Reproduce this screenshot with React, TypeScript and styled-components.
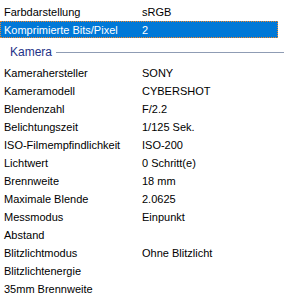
import styled, { createGlobalStyle } from 'styled-components'

type Prop = { label: string; value?: string }

const imageProps: Prop[] = [
  { label: 'Auflösungseinheit', value: '2' },
  { label: 'Farbdarstellung', value: 'sRGB' }
]

const selectedProp: Prop = { label: 'Komprimierte Bits/Pixel', value: '2' }

const cameraProps: Prop[] = [
  { label: 'Kamerahersteller', value: 'SONY' },
  { label: 'Kameramodell', value: 'CYBERSHOT' },
  { label: 'Blendenzahl', value: 'F/2.2' },
  { label: 'Belichtungszeit', value: '1/125 Sek.' },
  { label: 'ISO-Filmempfindlichkeit', value: 'ISO-200' },
  { label: 'Lichtwert', value: '0 Schritt(e)' },
  { label: 'Brennweite', value: '18 mm' },
  { label: 'Maximale Blende', value: '2.0625' },
  { label: 'Messmodus', value: 'Einpunkt' },
  { label: 'Abstand' },
  { label: 'Blitzlichtmodus', value: 'Ohne Blitzlicht' },
  { label: 'Blitzlichtenergie' },
  { label: '35mm Brennweite' }
]

const App = () => {
  return (
    <>
      <GlobalStyle />
      <Panel>
        <List>
          {imageProps.map((p) => (
            <Row key={p.label}>
              <Label>{p.label}</Label>
              <Value>{p.value}</Value>
            </Row>
          ))}
          <Row>
            <Selection>
              <Label $selected>{selectedProp.label}</Label>
              <Value $selected>{selectedProp.value}</Value>
            </Selection>
          </Row>
          <GroupHeader>
            <GroupTitle>Kamera</GroupTitle>
            <GroupLine />
          </GroupHeader>
          {cameraProps.map((p) => (
            <Row key={p.label}>
              <Label>{p.label}</Label>
              <Value>{p.value}</Value>
            </Row>
          ))}
        </List>
      </Panel>
    </>
  )
}

export default App

const GlobalStyle = createGlobalStyle`
  html, body {
    margin: 0;
    padding: 0;
    background: #ffffff;
  }
`

const Panel = styled.div`
  width: 284px;
  height: 303px;
  overflow: hidden;
  background: #ffffff;
  font-family: 'Liberation Sans', Arial, sans-serif;
  font-size: 11px;
  color: #000000;
`

// the first row is scrolled mostly out of view, as in the list
const List = styled.div`
  margin-top: -15px;
  display: flex;
  flex-direction: column;
`

const Row = styled.div`
  height: 18px;
  width: 278px;
  display: flex;
`

const Selection = styled.div`
  display: flex;
  width: 278px;
  height: 17px;
  box-sizing: border-box;
  background: #0078d7;
  color: #ffffff;
  border: 1px dotted #f0862a;
`

const Label = styled.div<{ $selected?: boolean }>`
  width: ${({ $selected }) => ($selected ? '141px' : '142px')};
  flex-shrink: 0;
  box-sizing: border-box;
  padding-left: ${({ $selected }) => ($selected ? '3px' : '4px')};
  line-height: ${({ $selected }) => ($selected ? '16px' : '18px')};
  white-space: nowrap;
  overflow: hidden;
`

const Value = styled.div<{ $selected?: boolean }>`
  flex: 1;
  line-height: ${({ $selected }) => ($selected ? '16px' : '18px')};
  white-space: nowrap;
`

const GroupHeader = styled.div`
  height: 25px;
  box-sizing: border-box;
  display: flex;
  align-items: flex-start;
  gap: 4px;
  padding-left: 10px;
`

const GroupTitle = styled.div`
  font-size: 12px;
  line-height: 14px;
  margin-top: 6px;
  color: #1e3287;
`

const GroupLine = styled.div`
  flex: 1;
  height: 1px;
  margin-top: 13px;
  background: #8f9cb4;
`
